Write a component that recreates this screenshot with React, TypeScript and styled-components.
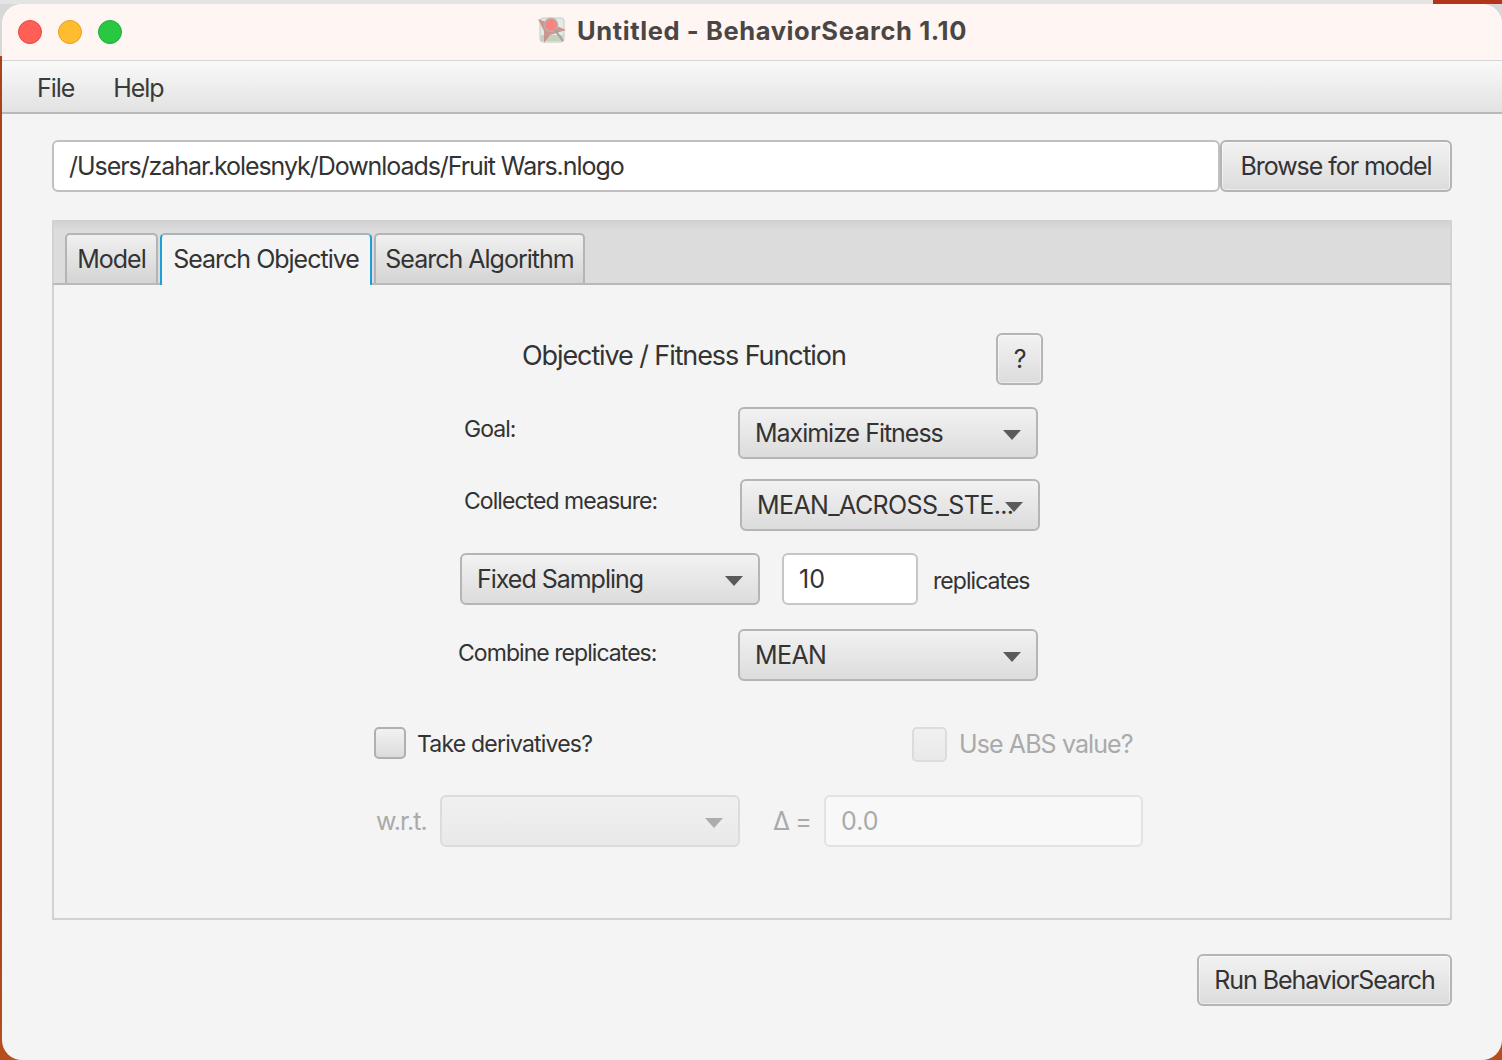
import styled, { createGlobalStyle } from "styled-components";

const GlobalStyle = createGlobalStyle`
  html, body {
    margin: 0;
    padding: 0;
    height: 1060px;
    overflow: hidden;
  }

  body {
    background:
      linear-gradient(to right, #e4e4e4 0 1433px, #b2351b 1433px) top / 100% 4px no-repeat,
      linear-gradient(to bottom, #d8d8d8 0 56px, #a8431c 56px, #a8431c 900px, #b5501d 1060px);
    font-family: Inter, "Liberation Sans", sans-serif;
    color: #333333;
  }

  * {
    box-sizing: border-box;
  }
`;

const Window = styled.div`
  width: 1500px;
  height: 1056px;
  margin: 4px 0 0 2px;
  border-radius: 20px;
  overflow: hidden;
  background: #f4f4f4;
  display: flex;
  flex-direction: column;
`;

const TitleBar = styled.header`
  height: 57px;
  flex: none;
  position: relative;
  background: #fff5f2;
  border-bottom: 1px solid #d6d6d6;
  display: flex;
  align-items: center;
  justify-content: center;
  column-gap: 10px;
  padding: 0 0 3px 0;
`;

const Lights = styled.div`
  position: absolute;
  left: 16px;
  top: 16px;
  display: flex;
  column-gap: 16px;
`;

const Light = styled.span<{ $color: string; $edge: string }>`
  width: 24px;
  height: 24px;
  border-radius: 50%;
  background: ${(props) => props.$color};
  border: 1px solid ${(props) => props.$edge};
`;

const TitleText = styled.h1`
  margin: 0;
  font-size: 25.5px;
  font-weight: 700;
  color: #4a4644;
  letter-spacing: 0.6px;
`;

const MenuBar = styled.nav`
  height: 53px;
  flex: none;
  background: linear-gradient(to bottom, #f9f9f9, #e2e2e2);
  border-bottom: 2px solid #b9b9b9;
  display: flex;
  align-items: center;
  column-gap: 39px;
  padding: 3px 0 0 35px;
`;

const MenuItem = styled.span`
  font-size: 25px;
  letter-spacing: -1.05px;
  color: #3a3a3a;
`;

const Content = styled.main`
  flex: 1;
  display: flex;
  flex-direction: column;
  padding: 26px 50px 0 50px;
`;

const PathRow = styled.div`
  display: flex;
  height: 52px;
`;

const PathField = styled.div`
  flex: 1;
  background: #ffffff;
  border: 2px solid #c0c0c0;
  border-radius: 6px;
  display: flex;
  align-items: center;
  padding: 0 15px;
  font-size: 25px;
  letter-spacing: -1.06px;
`;

const Button = styled.button<{ $width: number }>`
  height: 52px;
  background: linear-gradient(to bottom, #f2f2f2, #dcdcdc);
  border: 2px solid #b5b5b5;
  border-radius: 6px;
  box-shadow: inset 0 0 0 1px rgba(255, 255, 255, 0.45);
  font-family: inherit;
  font-size: 25px;
  letter-spacing: -1.05px;
  color: #333333;
  padding: 0;
  flex: none;
  width: ${(props) => props.$width}px;
`;

const TabPane = styled.section`
  margin-top: 28px;
  height: 700px;
  border: 2px solid #d2d2d2;
  border-top: none;
  display: flex;
  flex-direction: column;
`;

const TabHeader = styled.div`
  height: 65px;
  flex: none;
  margin: 0 -2px -1px;
  background: linear-gradient(to bottom, #d0d0d0, #dcdcdc 10px);
  border-bottom: 2px solid #b9b9b9;
  border-left: 2px solid #d2d2d2;
  border-right: 2px solid #d2d2d2;
  display: flex;
  align-items: flex-end;
  column-gap: 2px;
  padding-left: 11px;
`;

const Tab = styled.div<{ $active?: boolean; $width: number }>`
  width: ${(props) => props.$width}px;
  height: ${(props) => (props.$active ? 52 : 50)}px;
  margin-bottom: ${(props) => (props.$active ? -2 : 0)}px;
  display: flex;
  align-items: center;
  justify-content: center;
  padding-bottom: ${(props) => (props.$active ? 2 : 0)}px;
  font-size: 25px;
  letter-spacing: -1px;
  color: #333333;
  border-radius: 5px 5px 0 0;
  border: 2px solid ${(props) => (props.$active ? "#a9b4ba" : "#b4b4b4")};
  border-bottom: none;
  border-left-color: ${(props) => (props.$active ? "#1c9fd8" : "#b4b4b4")};
  border-right-color: ${(props) => (props.$active ? "#1c9fd8" : "#b4b4b4")};
  background: ${(props) =>
    props.$active ? "#f4f4f4" : "linear-gradient(to bottom, #f0f0f0, #d4d4d4)"};
`;

const Form = styled.div`
  flex: 1;
  display: flex;
  flex-direction: column;
`;

const Row = styled.div<{ $top: number; $left: number }>`
  display: flex;
  align-items: center;
  height: 52px;
  margin-top: ${(props) => props.$top}px;
  padding-left: ${(props) => props.$left}px;
`;

const CheckRow = styled(Row)`
  align-items: flex-start;
  height: 35px;
`;

const Heading = styled.h2`
  margin: 0 0 8px 0;
  width: 474px;
  font-size: 27px;
  font-weight: 400;
  letter-spacing: -1.1px;
  color: #333333;
  white-space: nowrap;
`;

const Label = styled.span<{ $width?: number; $shift?: number; $left?: number }>`
  width: ${(props) => (props.$width ? `${props.$width}px` : "auto")};
  margin-bottom: ${(props) => props.$shift ?? 0}px;
  margin-left: ${(props) => props.$left ?? 0}px;
  flex: none;
  font-size: 23px;
  letter-spacing: -0.95px;
  white-space: nowrap;
  color: #333333;
`;

const CheckLabel = styled(Label)`
  line-height: 34px;
  letter-spacing: -0.8px;
`;

const DisabledLabel = styled(Label)`
  font-size: 25px;
  letter-spacing: -0.9px;
  line-height: 35px;
  color: #aaaaaa;
`;

const Select = styled.div<{ $disabled?: boolean; $caps?: boolean }>`
  position: relative;
  width: 300px;
  height: 52px;
  flex: none;
  display: flex;
  align-items: center;
  padding-left: 15px;
  font-size: 25px;
  letter-spacing: ${(props) => (props.$caps ? -0.6 : -1.02)}px;
  white-space: nowrap;
  border-radius: 6px;
  border: 2px solid ${(props) => (props.$disabled ? "#dcdcdc" : "#b5b5b5")};
  background: ${(props) =>
    props.$disabled
      ? "linear-gradient(to bottom, #f0f0f0, #e9e9e9)"
      : "linear-gradient(to bottom, #f2f2f2, #dcdcdc)"};
  color: #333333;
`;

const Arrow = styled.span<{ $disabled?: boolean }>`
  position: absolute;
  right: 15px;
  top: 21px;
  width: 0;
  height: 0;
  border-left: 9px solid transparent;
  border-right: 9px solid transparent;
  border-top: 10px solid ${(props) => (props.$disabled ? "#acacac" : "#5a5a5a")};
`;

const Input = styled.div<{ $width: number; $disabled?: boolean; $left?: number }>`
  width: ${(props) => props.$width}px;
  height: 52px;
  flex: none;
  display: flex;
  align-items: center;
  margin-left: ${(props) => props.$left ?? 0}px;
  padding-left: 15px;
  font-size: 25px;
  letter-spacing: 0;
  border-radius: 6px;
  border: 2px solid ${(props) => (props.$disabled ? "#e2e2e2" : "#c6c6c6")};
  background: ${(props) => (props.$disabled ? "#f8f8f8" : "#ffffff")};
  color: ${(props) => (props.$disabled ? "#aaaaaa" : "#333333")};
`;

const Checkbox = styled.span<{ $size: number; $disabled?: boolean }>`
  width: ${(props) => props.$size}px;
  height: ${(props) => props.$size}px;
  flex: none;
  border-radius: 5px;
  border: 2px solid ${(props) => (props.$disabled ? "#dcdcdc" : "#b0b0b0")};
  background: ${(props) =>
    props.$disabled
      ? "linear-gradient(to bottom, #f0f0f0, #e9e9e9)"
      : "linear-gradient(to bottom, #f2f2f2, #dcdcdc)"};
`;

const Footer = styled.div`
  display: flex;
  justify-content: flex-end;
  margin-top: 34px;
`;

function TitleIcon() {
  return (
    <svg width="30" height="28" viewBox="0 0 30 28">
      <rect x="3" y="1" width="24" height="24" rx="3" fill="#e3ebe4" stroke="#c9c9c9" />
      <rect x="4" y="18" width="22" height="6" fill="#c5d3bd" />
      <path d="M1 2 L15 7 L29 13 L13 18 L7 26 L7 14 Z" fill="#c58a84" opacity="0.85" />
      <circle cx="14" cy="8" r="6.5" fill="#f98383" stroke="#b9b0a8" strokeWidth="1.5" />
      <path d="M18 13 L26 24" stroke="#a89f96" strokeWidth="2" />
    </svg>
  );
}

function App() {
  return (
    <>
      <GlobalStyle />
      <Window>
        <TitleBar>
          <Lights>
            <Light $color="#ff5f57" $edge="#e5483f" />
            <Light $color="#febc2e" $edge="#e0a028" />
            <Light $color="#28c840" $edge="#1fae35" />
          </Lights>
          <TitleIcon />
          <TitleText>Untitled - BehaviorSearch 1.10</TitleText>
        </TitleBar>
        <MenuBar>
          <MenuItem>File</MenuItem>
          <MenuItem>Help</MenuItem>
        </MenuBar>
        <Content>
          <PathRow>
            <PathField>/Users/zahar.kolesnyk/Downloads/Fruit Wars.nlogo</PathField>
            <Button $width={232}>Browse for model</Button>
          </PathRow>

          <TabPane>
            <TabHeader>
              <Tab $width={93}>Model</Tab>
              <Tab $width={212} $active>
                Search Objective
              </Tab>
              <Tab $width={211}>Search Algorithm</Tab>
            </TabHeader>
            <Form>
              <Row $top={49} $left={468}>
                <Heading>Objective / Fitness Function</Heading>
                <Button $width={47}>?</Button>
              </Row>
              <Row $top={22} $left={410}>
                <Label $width={274} $shift={8}>
                  Goal:
                </Label>
                <Select>
                  Maximize Fitness
                  <Arrow />
                </Select>
              </Row>
              <Row $top={20} $left={410}>
                <Label $width={276} $shift={8}>
                  Collected measure:
                </Label>
                <Select $caps>
                  MEAN_ACROSS_STE...
                  <Arrow />
                </Select>
              </Row>
              <Row $top={22} $left={406}>
                <Select>
                  Fixed Sampling
                  <Arrow />
                </Select>
                <Input $width={136} $left={22}>
                  10
                </Input>
                <Label $left={15} $shift={-4}>
                  replicates
                </Label>
              </Row>
              <Row $top={24} $left={404}>
                <Label $width={280} $shift={4}>
                  Combine replicates:
                </Label>
                <Select $caps>
                  MEAN
                  <Arrow />
                </Select>
              </Row>
              <CheckRow $top={46} $left={320}>
                <Checkbox $size={32} />
                <CheckLabel $width={495} $left={11}>
                  Take derivatives?
                </CheckLabel>
                <Checkbox $size={35} $disabled />
                <DisabledLabel $left={12}>Use ABS value?</DisabledLabel>
              </CheckRow>
              <Row $top={33} $left={322}>
                <DisabledLabel $width={64}>w.r.t.</DisabledLabel>
                <Select $disabled>
                  <Arrow $disabled />
                </Select>
                <DisabledLabel $width={51} $left={33}>
                  Δ =
                </DisabledLabel>
                <Input $width={319} $disabled>
                  0.0
                </Input>
              </Row>
            </Form>
          </TabPane>

          <Footer>
            <Button $width={255}>Run BehaviorSearch</Button>
          </Footer>
        </Content>
      </Window>
    </>
  );
}

export default App;
